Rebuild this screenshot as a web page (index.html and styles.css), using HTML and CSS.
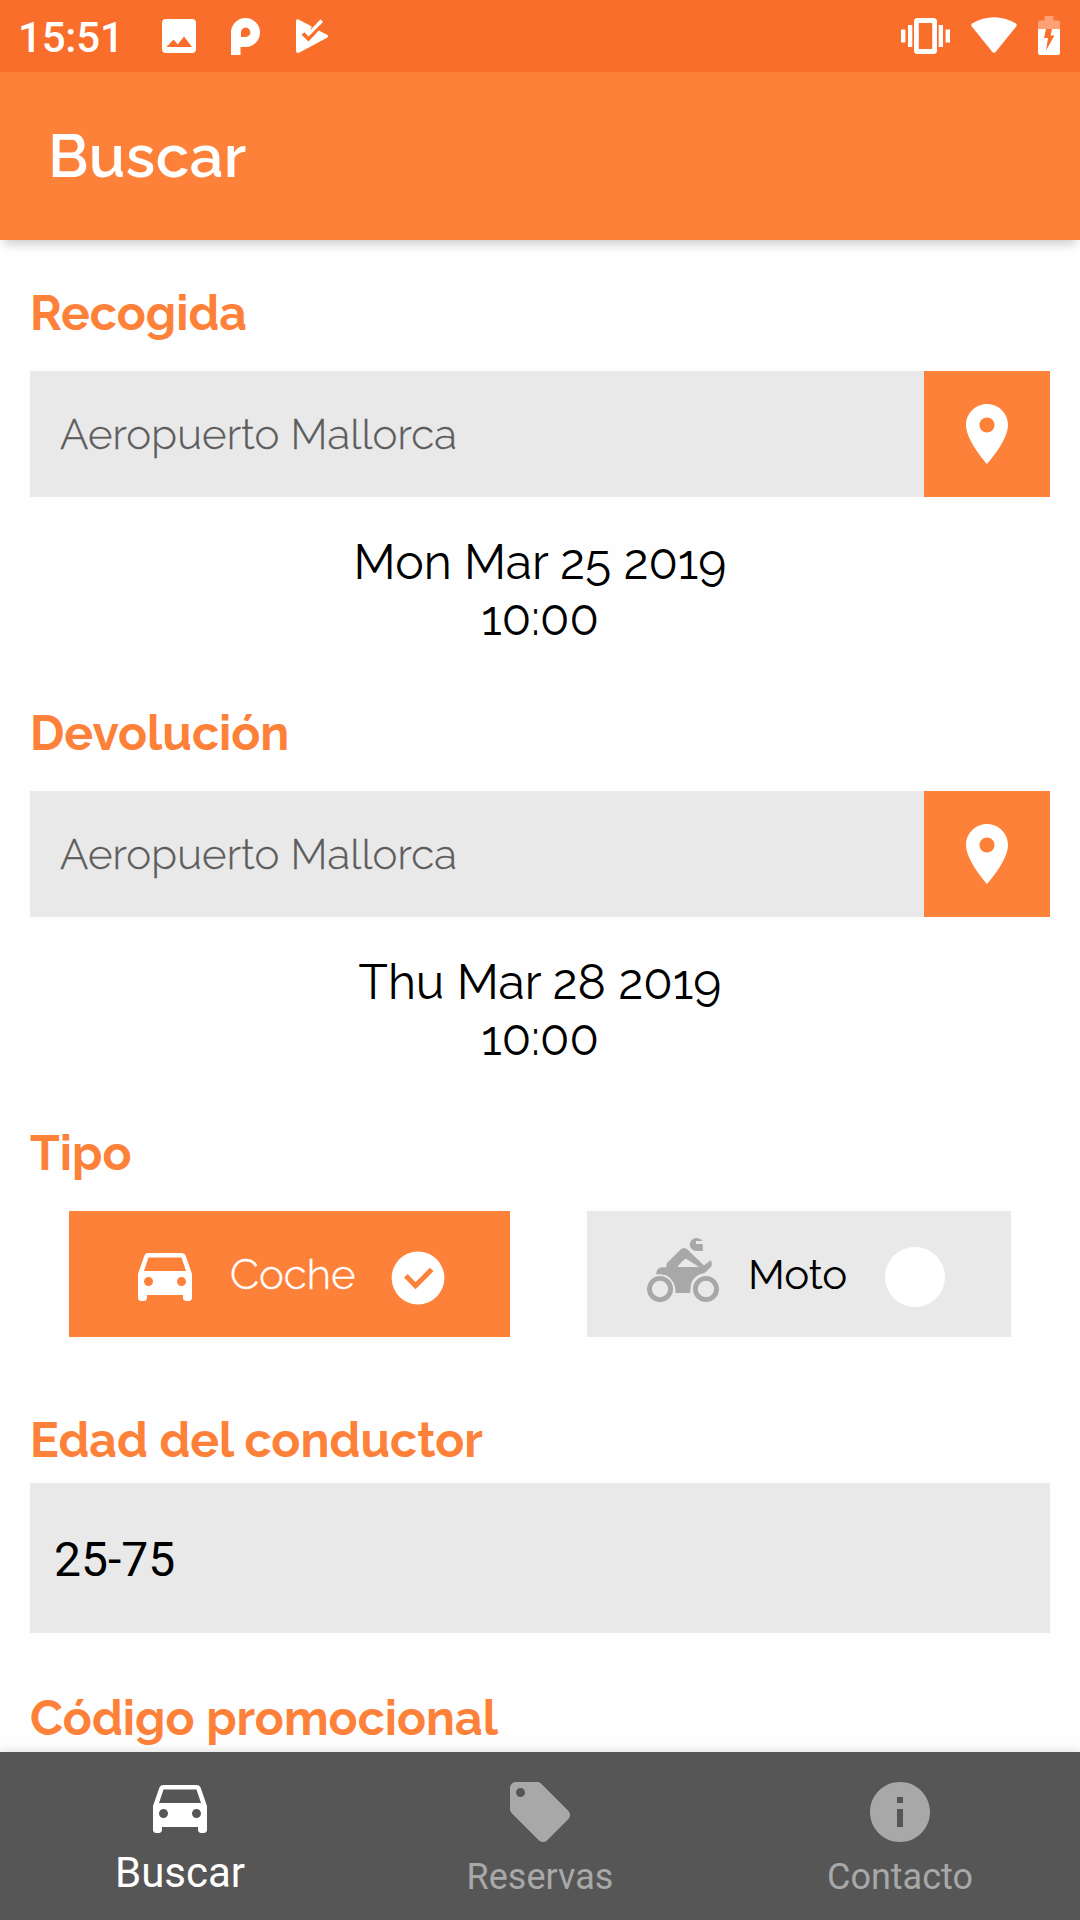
FILE: index.html
```html
<!DOCTYPE html>
<html lang="es">
<head>
<meta charset="utf-8">
<title>Buscar</title>
<link rel="stylesheet" href="styles.css">
</head>
<body>
<div class="screen">
  <div class="status">
    <span class="clock">15:51</span>
    <svg class="st-image" viewBox="0 0 34 34" width="34" height="34"><path fill-rule="evenodd" d="M4 0H30Q34 0 34 4V30Q34 34 30 34H4Q0 34 0 30V4Q0 0 4 0ZM4.500 28H30L22 17.500L15.800 25.500L11.500 20.500Z"/></svg>
    <svg class="st-p" viewBox="0 0 30 37" width="30" height="37"><path fill-rule="evenodd" d="M0 37V14.500A14.500 14.500 0 1 1 14.500 29H9.500V37ZM10 19V14.500A4.700 4.700 0 1 1 14.700 19Z"/></svg>
    <svg class="st-play" viewBox="0 0 33 34" width="33" height="34"><path d="M0 2.500Q0-1 3 .8L15.800 7.500L14 11.500L24.500 .3L27 3L12.500 17.500L8.500 13.200L5.500 15.700L12.500 22.500L22.800 11.500L31.500 16Q33 17.200 31.500 18.400L3.500 33.600Q0 34.500 0 32Z"/></svg>
    <span class="spacer"></span>
    <svg class="st-vib" viewBox="0 0 49 36" width="49" height="36"><path fill-rule="evenodd" d="M16.500 0H32.500Q36 0 36 3.500V32.500Q36 36 32.500 36H16.500Q13 36 13 32.500V3.500Q13 0 16.500 0ZM17.800 5V31H31.200V5ZM7 7H11.300V29H7ZM0 11.500H4.400V24.500H0ZM37.700 7H42V29H37.700ZM44.600 11.500H49V24.500H44.600Z"/></svg>
    <svg class="st-wifi" viewBox="0 0 46 36" width="46" height="36"><path d="M1 6.500Q23-6 45 6.500Q46.300 8 45.200 9.500L25 34.600Q23 37 21 34.600L.8 9.500Q-.3 8 1 6.500Z"/></svg>
    <svg class="st-bat" viewBox="0 0 22 39" width="22" height="39"><path opacity=".35" d="M6.500 0H15.500V4.500H20Q22 4.500 22 6.500V13H0V6.500Q0 4.500 2 4.500H6.500Z"/><path fill-rule="evenodd" d="M0 13H8L6 22H10L8 34.500L16.500 19.500H12.500L14 13H22V37Q22 39 20 39H2Q0 39 0 37Z"/></svg>
  </div>
  <header class="appbar">Buscar</header>

  <main class="content">
    <section class="place">
      <h2>Recogida</h2>
      <div class="field">
        <span class="value">Aeropuerto Mallorca</span>
        <span class="pin"><svg viewBox="0 0 24 24" width="72" height="72"><path d="M12 2C8.130 2 5 5.130 5 9c0 5.250 7 13 7 13s7-7.750 7-13c0-3.870-3.130-7-7-7zm0 9.500c-1.380 0-2.500-1.120-2.500-2.500s1.120-2.500 2.500-2.500 2.500 1.120 2.500 2.500-1.120 2.500-2.500 2.500z"/></svg></span>
      </div>
      <div class="date"><span>Mon Mar 25 2019</span><span>10:00</span></div>
    </section>
    <section class="place">
      <h2>Devolución</h2>
      <div class="field">
        <span class="value">Aeropuerto Mallorca</span>
        <span class="pin"><svg viewBox="0 0 24 24" width="72" height="72"><path d="M12 2C8.130 2 5 5.130 5 9c0 5.250 7 13 7 13s7-7.750 7-13c0-3.870-3.130-7-7-7zm0 9.500c-1.380 0-2.500-1.120-2.500-2.500s1.120-2.500 2.500-2.500 2.500 1.120 2.500 2.500-1.120 2.500-2.500 2.500z"/></svg></span>
      </div>
      <div class="date"><span>Thu Mar 28 2019</span><span>10:00</span></div>
    </section>
    <section class="type">
      <h2>Tipo</h2>
      <div class="options">
        <div class="option selected">
          <svg viewBox="0 0 24 24" width="72" height="72"><path d="M18.920 6.010C18.720 5.420 18.160 5 17.500 5h-11c-.66 0-1.210.42-1.420 1.010L3 12v8c0 .55.45 1 1 1h1c.55 0 1-.45 1-1v-1h12v1c0 .55.45 1 1 1h1c.55 0 1-.45 1-1v-8l-2.080-5.990zM6.500 16c-.83 0-1.500-.67-1.500-1.500S5.670 13 6.500 13s1.500.67 1.500 1.500S7.330 16 6.500 16zm11 0c-.83 0-1.500-.67-1.500-1.500s.67-1.500 1.500-1.500 1.500.67 1.500 1.500-.67 1.500-1.500 1.500zM5 11l1.500-4.500h11L19 11H5z"/></svg>
          <span>Coche</span>
          <svg class="check" viewBox="0 0 60 60" width="60" height="60"><circle cx="30" cy="30" r="26.400"/><path class="tick" d="M17.800 27.800L27.500 37.800L43.700 21.500"/></svg>
        </div>
        <div class="option">
          <svg class="moto" viewBox="0 0 72 64" width="72" height="64"><g fill="none" stroke="#a8a8a8" stroke-width="4.900"><circle cx="13" cy="51" r="10.600"/><circle cx="59" cy="51" r="10.600"/></g><path d="M55.500 3C53.500 .8 51.500 0 49.300 0A6.500 6.500 0 0 0 49.300 13H55.800V6H49V3Z"/><path fill-rule="evenodd" d="M9 36.300C9.500 32 11.500 29.500 15 29.300H19.500C19.200 27 19.300 25.500 21 24L33.500 11.500Q37 8.500 40.500 11.500L57 27.500L62.500 23.300L63.200 22.500Q64.700 23 64.700 24.500V28L59.500 33.200Q57.500 35.300 55 35.700C48 37.500 43.700 43 43.600 50L43.300 55H28.500C29 43.500 22 36.500 13.500 36.200ZM31 29H52.200L39.500 21Q38.700 20.600 37.800 21.200Q34 24 31 28Z"/></svg>
          <span>Moto</span>
          <i class="radio"></i>
        </div>
      </div>
    </section>
    <section class="age">
      <h2>Edad del conductor</h2>
      <div class="picker">25-75</div>
    </section>
    <section>
      <h2>Código promocional</h2>
    </section>
  </main>

  <nav class="tabs">
    <div class="tab active">
      <svg viewBox="0 0 24 24" width="72" height="72"><path d="M18.920 6.010C18.720 5.420 18.160 5 17.500 5h-11c-.66 0-1.210.42-1.420 1.010L3 12v8c0 .55.45 1 1 1h1c.55 0 1-.45 1-1v-1h12v1c0 .55.45 1 1 1h1c.55 0 1-.45 1-1v-8l-2.080-5.990zM6.500 16c-.83 0-1.500-.67-1.500-1.500S5.670 13 6.500 13s1.500.67 1.500 1.500S7.330 16 6.500 16zm11 0c-.83 0-1.500-.67-1.500-1.500s.67-1.500 1.500-1.500 1.500.67 1.500 1.500-.67 1.500-1.500 1.500zM5 11l1.500-4.500h11L19 11H5z"/></svg>
      <span>Buscar</span>
    </div>
    <div class="tab">
      <svg viewBox="0 0 24 24" width="72" height="72"><path d="M21.410 11.580l-9-9C12.050 2.220 11.550 2 11 2H4c-1.100 0-2 .9-2 2v7c0 .55.22 1.050.59 1.420l9 9c.36.36.86.58 1.410.58.55 0 1.050-.22 1.410-.59l7-7c.37-.36.59-.86.59-1.410 0-.55-.23-1.060-.59-1.420zM5.500 7C4.670 7 4 6.330 4 5.500S4.670 4 5.500 4 7 4.670 7 5.500 6.330 7 5.500 7z"/></svg>
      <span>Reservas</span>
    </div>
    <div class="tab">
      <svg viewBox="0 0 24 24" width="72" height="72"><path d="M12 2C6.480 2 2 6.480 2 12s4.480 10 10 10 10-4.480 10-10S17.520 2 12 2zm1 15h-2v-6h2v6zm0-8h-2V7h2v2z"/></svg>
      <span>Contacto</span>
    </div>
  </nav>
</div>
</body>
</html>
```
FILE: styles.css
```css
* { box-sizing: border-box; }

body {
  margin: 0;
  font-family: Raleway, Lato, sans-serif;
}

svg {
  display: block;
  flex: none;
  fill: #fff;
}

.screen {
  width: 1080px;
  height: 1920px;
  display: flex;
  flex-direction: column;
  overflow: hidden;
  background: #fefefe;
}

/* Status bar */
.status {
  flex: none;
  height: 72px;
  display: flex;
  align-items: flex-start;
  padding: 0 20px 0 18px;
  background: #fa6e2b;
}

.clock {
  width: 144px;
  padding-top: 1px;
  font: 500 42px/74px Roboto, sans-serif;
  letter-spacing: -0.2px;
  color: #fff;
}

.spacer { flex: 1; }
.st-image { margin-top: 19px; }
.st-p { margin: 18px 0 0 35px; }
.st-play { margin: 19px 0 0 35px; }
.st-vib { margin-top: 18px; }
.st-wifi { margin: 17px 0 0 21px; }
.st-bat { margin: 16px 0 0 21px; }

.appbar {
  flex: none;
  height: 168px;
  padding-left: 48px;
  font-size: 60px;
  font-weight: 600;
  letter-spacing: 0.4px;
  line-height: 168px;
  color: #fff;
  background: #fd8139;
  box-shadow: 0 8px 10px -4px rgba(0, 0, 0, 0.2);
}

/* Search form */
.content {
  flex: 1;
  min-height: 0;
  overflow: hidden;
  padding: 45px 30px 0;
}

h2 {
  margin: 0 0 30px;
  font-size: 48px;
  font-weight: 700;
  line-height: 56px;
  color: #fd8139;
}

.place { height: 420px; }

.field {
  display: flex;
  height: 126px;
  margin-bottom: 37px;
  background: #e9e9e9;
}

.value {
  flex: 1;
  padding-left: 30px;
  font-size: 42px;
  font-weight: 300;
  letter-spacing: 0.2px;
  line-height: 128px;
  color: #5c5c5c;
  -webkit-text-stroke: 0.3px #5c5c5c;
}

.pin {
  width: 126px;
  display: grid;
  place-items: center;
  background: #fd8139;
}

.date {
  display: flex;
  flex-direction: column;
  align-items: center;
  font-size: 48px;
  font-weight: 400;
  line-height: 56.400px;
  color: #000;
}

.type { height: 287px; }

.options {
  display: flex;
  justify-content: space-between;
  padding: 0 39px;
}

.option {
  display: flex;
  align-items: center;
  width: 424px;
  height: 126px;
  padding: 0 66px 0 60px;
  font-size: 42px;
  font-weight: 400;
  letter-spacing: -0.2px;
  color: #000;
  background: #e9e9e9;
}

.option span { margin: 0 auto 0 29px; }

.option.selected {
  width: 441px;
  padding-right: 62px;
  font-weight: 300;
  letter-spacing: 0;
  color: #fff;
  background: #fd8139;
  -webkit-text-stroke: 0.4px #fff;
}

.check {
  margin-top: 7px;
  -webkit-text-stroke: 0;
}

.tick {
  fill: none;
  stroke: #fd8139;
  stroke-width: 5;
}

.moto {
  margin-bottom: 8px;
  fill: #a8a8a8;
}

.radio {
  width: 60px;
  height: 60px;
  margin-top: 6px;
  border-radius: 50%;
  background: #fff;
}

.age { height: 278px; }
.age h2 { margin-bottom: 15px; }

.picker {
  height: 150px;
  padding: 1px 0 0 24px;
  font: 400 48px/151px Roboto, sans-serif;
  color: #000;
  background: #e9e9e9;
}

/* Bottom navigation */
.tabs {
  flex: none;
  display: flex;
  height: 168px;
  background: #565656;
  box-shadow: 0 -1px 10px rgba(0, 0, 0, 0.12);
}

.tab {
  flex: 1;
  display: flex;
  flex-direction: column;
  align-items: center;
  gap: 8px;
  padding-top: 24px;
  font: 400 36px/42px Roboto, sans-serif;
  color: #a8a8a8;
}

.tab svg { fill: #a8a8a8; }

.tab.active {
  gap: 6px;
  padding-top: 18px;
  font-size: 42px;
  line-height: 50px;
  color: #fff;
}

.tab.active svg { fill: #fff; }
```
